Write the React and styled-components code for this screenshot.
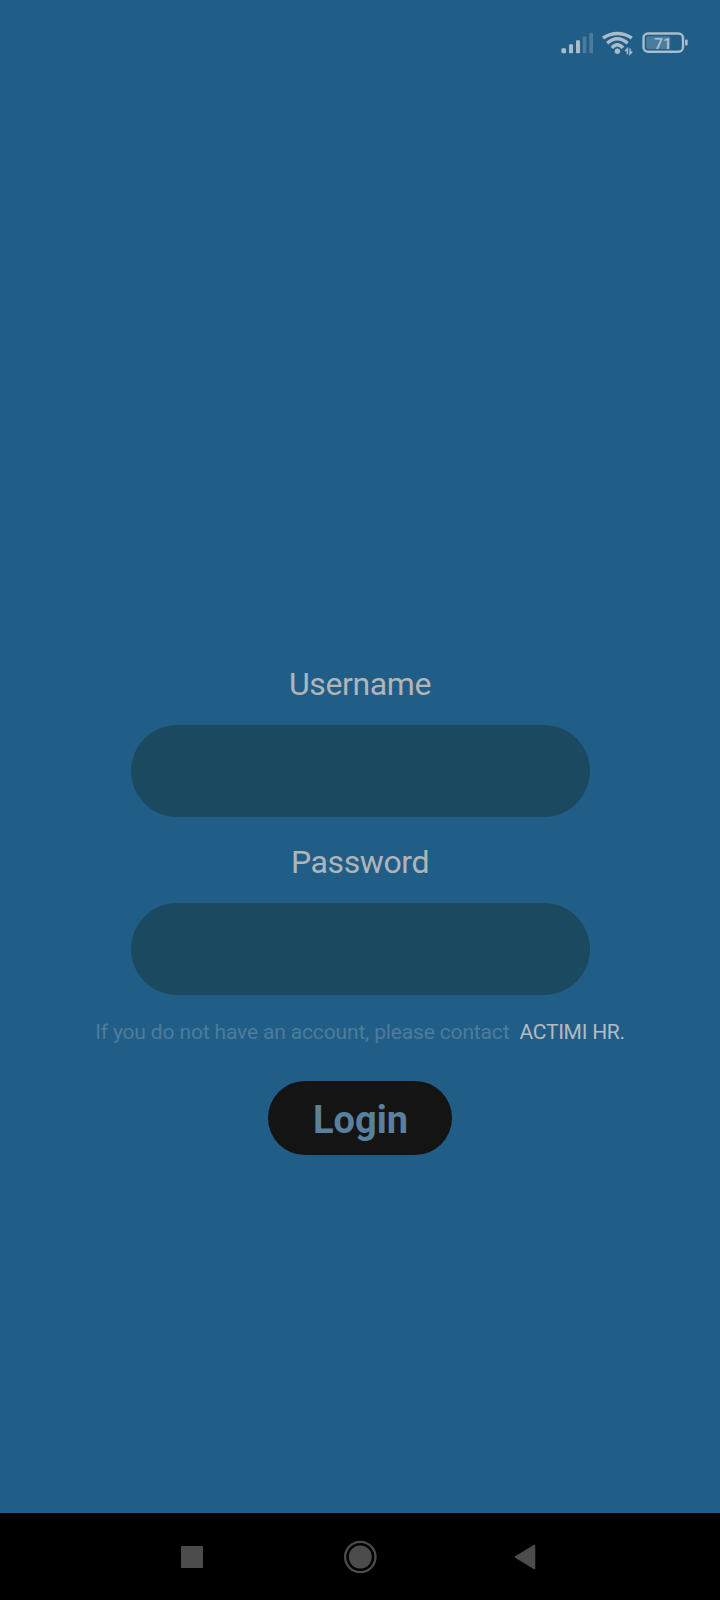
import React from "react";
import styled, { createGlobalStyle } from "styled-components";

const GlobalStyle = createGlobalStyle`
  *, *::before, *::after { box-sizing: border-box; }
  body { margin: 0; background: #205e87; font-family: Roboto, "Liberation Sans", sans-serif; }
`;

const Screen = styled.div`
  display: flex;
  flex-direction: column;
  width: 720px;
  height: 1600px;
  background: #205e87;
  overflow: hidden;
`;

const StatusBar = styled.header`
  display: flex;
  justify-content: flex-end;
  height: 86px;
  padding: 26px 26px 0 0;
`;

const StatusIcons = styled.svg`
  display: block;
  font-family: Roboto, sans-serif;
`;

const Form = styled.form`
  flex: 1;
  display: flex;
  flex-direction: column;
  align-items: center;
  padding-top: 578px;
`;

const Field = styled.label`
  display: flex;
  flex-direction: column;
  align-items: center;
  height: 178px;
`;

const Label = styled.span`
  height: 61px;
  line-height: 40px;
  font-size: 32px;
  letter-spacing: -0.4px;
  color: #b2b5b8;
`;

const Input = styled.input`
  width: 459px;
  height: 92px;
  padding: 0 40px;
  border: 0;
  outline: 0;
  border-radius: 46px;
  background: #1b4a60;
  color: #b2b5b8;
  font: inherit;
  font-size: 32px;
`;

const Note = styled.p`
  display: flex;
  gap: 10px;
  margin: -2px 0 0;
  height: 63px;
  line-height: 28px;
  font-size: 21px;
  letter-spacing: -0.15px;
  white-space: nowrap;
  color: #4d7c9c;
`;

const Contact = styled.span`
  letter-spacing: -0.25px;
  color: #b5bbc1;
`;

const LoginButton = styled.button`
  width: 184px;
  height: 74px;
  padding: 3px 0 0 1px;
  border: 0;
  border-radius: 37px;
  background: #141414;
  color: #5a809e;
  font: bold 38px/44px Roboto, sans-serif;
`;

const NavBar = styled.nav`
  display: flex;
  justify-content: space-between;
  align-items: center;
  height: 87px;
  padding: 0 176px 0 174px;
  background: #000;
`;

const NavIcon = styled.svg`
  display: block;
  fill: #4c4c4c;
`;

const bars = [
  { x: 5.5, w: 4.5, h: 5, on: true },
  { x: 13, w: 4, h: 9, on: true },
  { x: 20, w: 4, h: 13, on: true },
  { x: 26.7, w: 3.7, h: 16.7, on: false },
  { x: 33.3, w: 3.7, h: 20.5, on: false },
];

export default function App() {
  return (
    <>
      <GlobalStyle />
      <Screen>
        <StatusBar>
          <StatusIcons width="138" height="34" viewBox="0 0 138 34">
            {bars.map((b) => (
              <rect key={b.x} x={b.x} y={27.2 - b.h} width={b.w} height={b.h} rx="1" fill={b.on ? "#a9bccb" : "#4b7c9e"} />
            ))}
            <g fill="none" stroke="#a9bccb" strokeWidth="3.4">
              <path d="M47 12 Q61.4 3 75.800 12" />
              <path d="M51.200 17.200 Q61.400 8.500 71.600 17.200" />
              <path d="M55.800 21.900 Q61.400 15.600 67 21.900" />
            </g>
            <circle cx="61.400" cy="25.200" r="2.700" fill="#a9bccb" />
            <path d="M71.400 28.200v-5.500l-2.200 2.600M74 22.500v5.500l2.200-2.600" fill="none" stroke="#a9bccb" strokeWidth="1.500" />
            <rect x="87.500" y="7.500" width="39.500" height="18.200" rx="4.500" fill="none" stroke="#a9bccb" strokeWidth="2.400" />
            <rect x="90.300" y="10.300" width="24" height="12.600" rx="2" fill="#4b7c9e" />
            <rect x="129" y="13.500" width="2.700" height="6" rx="1" fill="#a9bccb" />
            <text x="107" y="22.700" fontSize="15.500" fontWeight="500" textAnchor="middle" fill="#b0c1cf">71</text>
          </StatusIcons>
        </StatusBar>
        <Form>
          <Field>
            <Label>Username</Label>
            <Input type="text" />
          </Field>
          <Field>
            <Label>Password</Label>
            <Input type="password" />
          </Field>
          <Note>
            <span>If you do not have an account, please contact</span>
            <Contact>ACTIMI HR.</Contact>
          </Note>
          <LoginButton type="button">Login</LoginButton>
        </Form>
        <NavBar>
          <NavIcon width="34" height="34" viewBox="0 0 34 34">
            <rect x="7" y="6" width="22" height="22" rx="1" />
          </NavIcon>
          <NavIcon width="36" height="34" viewBox="0 0 36 34">
            <circle cx="19.300" cy="17" r="11.500" />
            <circle cx="19.300" cy="17" r="15.200" fill="none" stroke="#4c4c4c" strokeWidth="2.300" />
          </NavIcon>
          <NavIcon width="34" height="34" viewBox="0 0 34 34">
            <path d="M5.500 17 24.500 5.500V28.500Z" stroke="#4c4c4c" strokeWidth="1.500" strokeLinejoin="round" />
          </NavIcon>
        </NavBar>
      </Screen>
    </>
  );
}
